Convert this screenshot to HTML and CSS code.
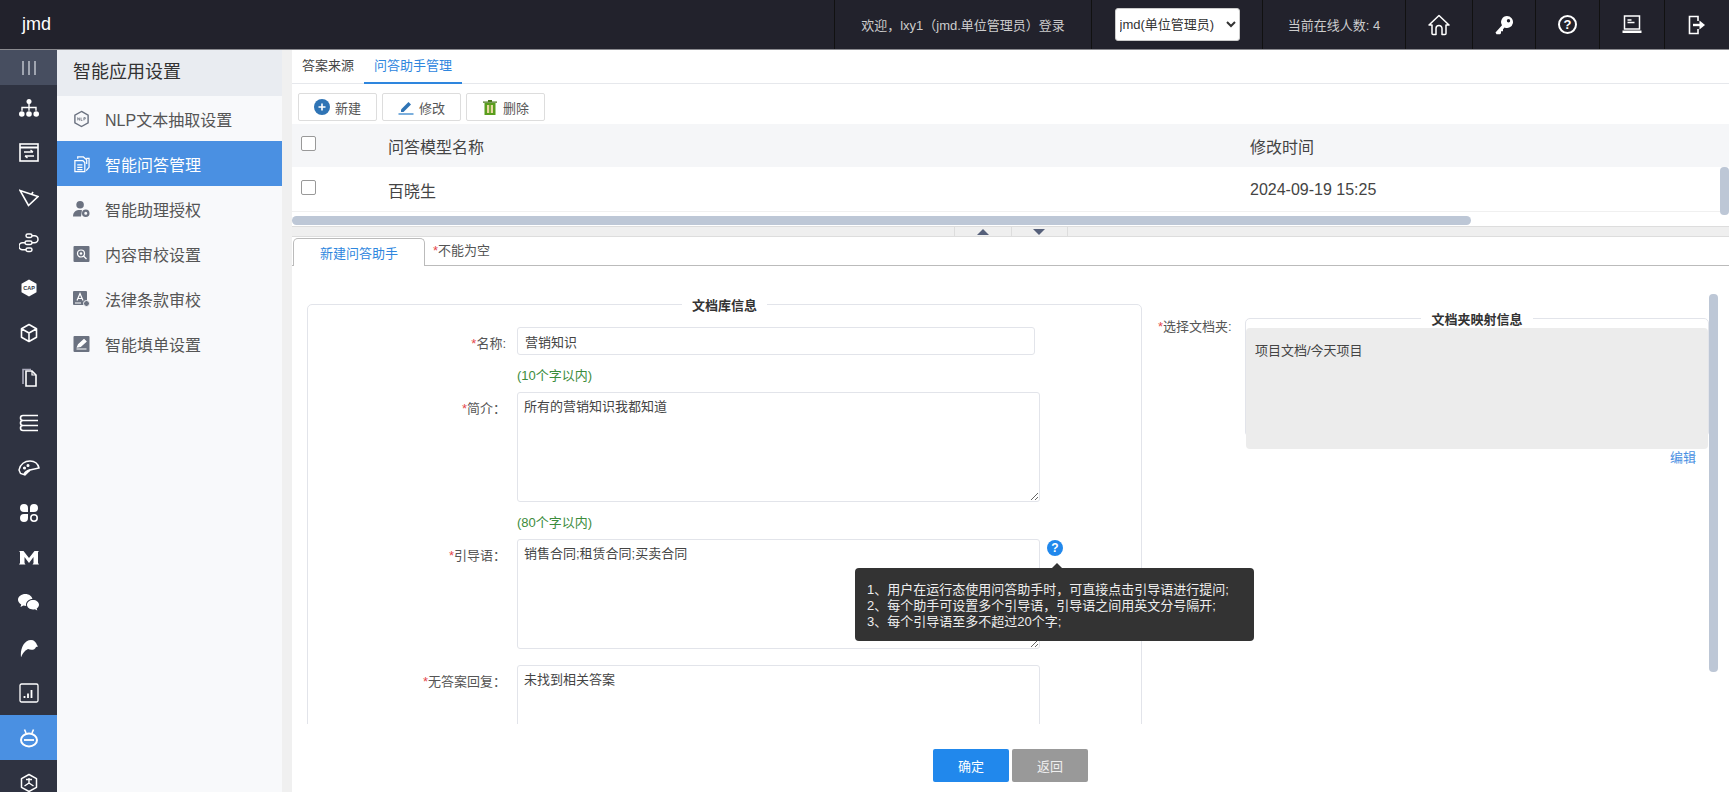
FILE: index.html
```html
<!DOCTYPE html>
<html lang="zh-CN">
<head>
    <meta charset="UTF-8">
    <meta name="viewport" content="width=device-width, initial-scale=1.0">
    <title>智能问答管理</title>
    <link rel="stylesheet" href="styles.css">
</head>
<body>
    <!-- Top bar -->
    <header class="topbar">
        <div class="logo">jmd</div>
        <div class="top-cell cell-welcome">欢迎，lxy1（jmd.单位管理员）登录</div>
        <div class="top-cell cell-role">
            <select class="role-select">
                <option>jmd(单位管理员)</option>
            </select>
        </div>
        <div class="top-cell cell-online">当前在线人数: 4</div>
        <div class="top-cell cell-icon w67">
            <svg width="22" height="22" viewBox="0 0 22 22" fill="none" stroke="#fff" stroke-width="1.5" stroke-linejoin="round"><path d="M1 11 11 1.5 21 11h-3v8.5a1 1 0 0 1-1 1h-3v-6a3 3 0 0 0-6 0v6H5a1 1 0 0 1-1-1V11z"/></svg>
        </div>
        <div class="top-cell cell-icon w63">
            <svg width="20" height="20" viewBox="0 0 20 20"><path fill="#fff" fill-rule="evenodd" d="M13 1a6 6 0 1 1-2.4 11.5L9 14.2v2H7v2l-1 1H2.5L1.5 17.500 8 10.200A6 6 0 0 1 13 1zm1.500 3a1.700 1.700 0 1 0 0 3.400 1.700 1.700 0 0 0 0-3.400z"/></svg>
        </div>
        <div class="top-cell cell-icon w64">
            <span class="help-ring">?</span>
        </div>
        <div class="top-cell cell-icon w65">
            <svg width="20" height="20" viewBox="0 0 20 20" fill="none" stroke="#fff"><rect x="2.500" y="1" width="15" height="13" stroke-width="1.500"/><path d="M5.500 5h4M5.500 7.500h7" stroke-width="1.300"/><path d="M0.500 15.500h19V18H0.500z" fill="#fff" stroke="none"/></svg>
        </div>
        <div class="top-cell cell-icon w65">
            <svg width="20" height="20" viewBox="0 0 20 20" fill="none" stroke="#fff" stroke-width="1.600"><path d="M11 6V1.500H2.500v17H11V14"/><path d="M6 10h7.500" stroke-width="2.400"/><path d="M12.500 5.500 18 10l-5.500 4.500z" fill="#fff" stroke="none"/></svg>
        </div>
    </header>

    <div class="layout">
        <!-- Icon rail -->
        <nav class="rail">
            <div class="rail-toggle"><span></span><span></span><span></span></div>
            <div class="rail-item">
                <svg width="20" height="20" viewBox="0 0 20 20" fill="#fff"><circle cx="10" cy="3.500" r="2.500"/><circle cx="2.800" cy="16" r="2.800"/><circle cx="10" cy="16" r="2.800"/><circle cx="17.200" cy="16" r="2.800"/><path d="M9.300 5h1.400v3.800h7v4h-1.400v-2.600h-5.600v2.600H9.300v-2.600H3.700v2.600H2.300v-4h7z"/></svg>
            </div>
            <div class="rail-item">
                <svg width="20" height="20" viewBox="0 0 20 20" fill="none" stroke="#fff"><rect x="1" y="1" width="18" height="17" stroke-width="1.600"/><path d="M1 4.500h18" stroke-width="2"/><path d="M5 9h9M11.500 7 14 9M15 13H6M8.500 15 6 13" stroke-width="1.400"/></svg>
            </div>
            <div class="rail-item">
                <svg width="20" height="20" viewBox="0 0 20 20" fill="none" stroke="#fff" stroke-width="1.600"><path d="M1 2.500 19 8.500 9.500 17.500zM12.500 6.500 14 4"/></svg>
            </div>
            <div class="rail-item">
                <svg width="20" height="20" viewBox="0 0 20 20" fill="none" stroke="#fff" stroke-width="1.500"><rect x="7" y="1" width="6" height="3.500" rx="1.700"/><rect x="6" y="8" width="7" height="3.500" rx="1.700"/><rect x="7" y="15" width="6" height="3.500" rx="1.700"/><path d="M13 2.800h2.500a3 3 0 0 1 0 7H13M6 9.800H3.500a3 3 0 0 0 0 7H7"/></svg>
            </div>
            <div class="rail-item">
                <svg width="20" height="20" viewBox="0 0 20 20"><path fill="#fff" d="M10 1.500 17.500 5.700v8.600L10 18.500 2.500 14.300V5.700z"/><text class="cap-text" x="10" y="12" text-anchor="middle">CAP</text></svg>
            </div>
            <div class="rail-item">
                <svg width="20" height="20" viewBox="0 0 20 20" fill="none" stroke="#fff" stroke-width="1.600" stroke-linejoin="round"><path d="M10 1.500 17.500 5.700v8.600L10 18.500 2.500 14.300V5.700zM2.500 5.700 10 10l7.500-4.300M10 10v8.500"/></svg>
            </div>
            <div class="rail-item">
                <svg width="20" height="20" viewBox="0 0 20 20" fill="none" stroke="#fff" stroke-width="1.600"><path d="M7 3h6l4 4v11H7z"/><path d="M4 16V1.500h8" stroke="#aab" /><path d="M13 3v4h4" stroke-width="1.200"/></svg>
            </div>
            <div class="rail-item">
                <svg width="20" height="20" viewBox="0 0 20 20" fill="none" stroke="#fff" stroke-width="1.600"><path d="M19 2.500H4a2.500 2.500 0 0 0 0 5h15M1.500 7.500h17M1.500 12.500h17M19 7.500H4a2.500 2.500 0 0 0 0 5M19 12.500H4a2.500 2.500 0 0 0 0 5h15"/></svg>
            </div>
            <div class="rail-item">
                <svg width="22" height="20" viewBox="0 0 22 20" fill="none" stroke="#fff" stroke-width="1.500"><path d="M1 12C2 6 7 3 12 3s8 3 9 7l-9 2-5 5-4.500-1.500z"/><path d="M6 17c1-3 3-4 6-5" stroke-width="2"/><circle cx="6.500" cy="10" r=".8" fill="#fff"/><circle cx="10" cy="7.500" r=".8" fill="#fff"/></svg>
            </div>
            <div class="rail-item">
                <svg width="20" height="20" viewBox="0 0 20 20" fill="#fff"><path d="M5 1a4 4 0 0 1 4 4v4H5a4 4 0 0 1 0-8zM15 1a4 4 0 0 1 0 8h-4V5a4 4 0 0 1 4-4zM5 11h4v4a4 4 0 1 1-4-4z"/><circle cx="15" cy="15" r="3.200" fill="none" stroke="#fff" stroke-width="1.600"/></svg>
            </div>
            <div class="rail-item">
                <svg width="20" height="16" viewBox="0 0 20 16" fill="#fff"><path d="M0 1h4.500L10 8l5.500-7H20l-1 1v11l1 1.500h-6.500L14.500 13V7L10 13 5.500 7v6l1 1.500H0L1 13V2z"/></svg>
            </div>
            <div class="rail-item">
                <svg width="21" height="18" viewBox="0 0 21 18" fill="#fff"><path d="M7.500 0C11 0 14 2.200 14.400 5 11 5 8 7.500 8 10.500c0 .6.100 1 .2 1.500-1 0-1.800-.1-2.700-.4L2.500 13l.7-2.500C1.200 9.100 0 7.500 0 5.700 0 2.500 3.300 0 7.500 0z"/><path d="M15 6c3.300 0 6 2.100 6 4.800 0 1.500-.9 2.800-2.300 3.700l.6 2-2.400-1.200c-.6.100-1.200.2-1.900.2-3.300 0-6-2.100-6-4.700C9 8.100 11.700 6 15 6z"/></svg>
            </div>
            <div class="rail-item">
                <svg width="18" height="18" viewBox="0 0 18 18" fill="#fff"><path d="M1 18C0 10 4 1 11 1c3 0 5 2 6 5l1 1.500-2 .5c-1 3-5 3.500-8 2-2 1-5 3-7 8.500z"/></svg>
            </div>
            <div class="rail-item">
                <svg width="20" height="20" viewBox="0 0 20 20" fill="none"><rect x="1" y="1" width="18" height="18" rx="1.500" stroke="#fff" stroke-width="1.300"/><path d="M5.500 15v-2M9 15v-4.500M12.500 15V7" stroke="#fff" stroke-width="1.800"/></svg>
            </div>
            <div class="rail-item is-active">
                <svg width="20" height="20" viewBox="0 0 20 20" fill="none" stroke="#fff" stroke-width="2"><ellipse cx="10" cy="12" rx="8" ry="6.500"/><path d="M5 12h10" stroke-width="1.800"/><path d="M5.500 1.500 7 5M14.500 1.500 13 5" stroke-width="1.600"/></svg>
            </div>
            <div class="rail-item">
                <svg width="20" height="20" viewBox="0 0 20 20" fill="none" stroke="#fff" stroke-width="1.500" stroke-linejoin="round"><path d="M10 1.500 17.500 5.700v8.600L10 18.500 2.500 14.300V5.700z"/><path d="M10 10V5M10 10l-4.500 3M10 10l4.500 3M7 6.500 13 6.500" stroke-width="1.400"/></svg>
            </div>
        </nav>

        <!-- Sub menu -->
        <aside class="submenu">
            <div class="submenu-title">智能应用设置</div>
            <div class="submenu-item">
                <svg width="18" height="18" viewBox="0 0 18 18" fill="none" stroke="#6b7280"><path d="M9 1 16 5v8l-7 4-7-4V5z" stroke-width="1.500"/><path d="M5 7.500v3M5 7.500l2 3v-3M8.500 7.500v3h1.500M11.500 10.500v-3h1.500v1.500h-1.500" stroke-width=".8"/></svg>
                NLP文本抽取设置
            </div>
            <div class="submenu-item is-active">
                <svg width="18" height="18" viewBox="0 0 18 18" fill="none" stroke="#fff" stroke-width="1.300"><path d="M2 5.500h8.500l2 2V17H2zM5 3.500V1.500h6l3.500 3V9M14 3h3v9.500l-3 3.500"/><path d="M4.500 10h5.500M4.500 12.500h5.500M4.500 15h5.500"/></svg>
                智能问答管理
            </div>
            <div class="submenu-item">
                <svg width="18" height="18" viewBox="0 0 18 18" fill="#6b7280"><circle cx="7.500" cy="4.500" r="4"/><path d="M0 17c0-5 3-7 7.500-7 1 0 1.500 0 2 .3L8.500 17z"/><circle cx="13.500" cy="13.500" r="2.800" fill="none" stroke="#6b7280" stroke-width="2.400"/></svg>
                智能助理授权
            </div>
            <div class="submenu-item">
                <svg width="16" height="16" viewBox="0 0 16 16"><rect width="16" height="16" rx="1" fill="#6b7280"/><circle cx="7.500" cy="7.500" r="3.500" fill="none" stroke="#fff" stroke-width="1.200"/><path d="M10 10l3 3" stroke="#fff" stroke-width="1.200"/><circle cx="7.500" cy="7.500" r="1.200" fill="#fff"/></svg>
                内容审校设置
            </div>
            <div class="submenu-item">
                <svg width="17" height="16" viewBox="0 0 17 16"><rect width="14" height="14" rx="1" fill="#6b7280"/><path d="M4 9.500 7 2.500l3 7M5 7.500h4M2 12h6" stroke="#fff" stroke-width="1.200" fill="none"/><circle cx="13.500" cy="12.500" r="3" fill="#6b7280" stroke="#f8f9fb"/></svg>
                法律条款审校
            </div>
            <div class="submenu-item">
                <svg width="16" height="16" viewBox="0 0 16 16"><rect width="16" height="16" rx="1" fill="#6b7280"/><path d="M4 11 5 8.500 10.500 3.500 12.500 5.500 7 10.500zM3 13h10" stroke="#fff" stroke-width="1.200" fill="#fff"/></svg>
                智能填单设置
            </div>
        </aside>

        <div class="gutter"></div>

        <main class="main">
            <div class="tabs">
                <span class="tab">答案来源</span>
                <span class="tab is-active">问答助手管理</span>
            </div>

            <div class="toolbar">
                <button class="tool-btn">
                    <svg width="16" height="16" viewBox="0 0 16 16"><circle cx="8" cy="8" r="8" fill="#2f74b5"/><path d="M8 4.500v7M4.500 8h7" stroke="#fff" stroke-width="1.600"/></svg>
                    新建
                </button>
                <button class="tool-btn">
                    <svg width="16" height="16" viewBox="0 0 16 16"><path d="M3 10.500 10.500 3l2.500 2.500L5.500 13H3z" fill="#2f74b5"/><path d="M0.500 15h15" stroke="#5b9bd5" stroke-width="1.600"/></svg>
                    修改
                </button>
                <button class="tool-btn">
                    <svg width="16" height="16" viewBox="0 0 16 16"><rect x="2.500" y="4" width="11" height="12" fill="#5a9e1e"/><rect x="5" y="6" width="2.200" height="8" fill="#e8d9a0"/><rect x="8.800" y="6" width="2.200" height="8" fill="#e8d9a0"/><path d="M1 2.500h14v1.200H1zM6 1h4v1.500H6z" fill="#4b7a1c"/></svg>
                    删除
                </button>
            </div>

            <div class="grid-wrap">
                <div class="grid-row grid-head">
                    <span class="check"></span>
                    <span class="cell">问答模型名称</span>
                    <span class="cell">修改时间</span>
                </div>
                <div class="grid-row">
                    <span class="check"></span>
                    <span class="cell">百晓生</span>
                    <span class="cell">2024-09-19 15:25</span>
                </div>
                <div class="scroll-v scroll-v-grid"></div>
            </div>
            <div class="scroll-h"><div class="scroll-h-thumb"></div></div>

            <div class="splitter">
                <span class="split-btn"><i class="arrow-up"></i></span>
                <span class="split-btn"><i class="arrow-down"></i></span>
            </div>

            <div class="edit-tabs">
                <span class="edit-tab">新建问答助手</span>
                <span class="edit-note"><em>*</em>不能为空</span>
            </div>

            <div class="form-area">
                <fieldset class="box box-doc">
                    <legend>文档库信息</legend>
                    <div class="form-row">
                        <label class="form-label"><em>*</em>名称:</label>
                        <input class="text-input" type="text" value="营销知识">
                    </div>
                    <div class="form-hint">(10个字以内)</div>
                    <div class="form-row">
                        <label class="form-label"><em>*</em>简介：</label>
                        <textarea class="text-area">所有的营销知识我都知道</textarea>
                    </div>
                    <div class="form-hint">(80个字以内)</div>
                    <div class="form-row">
                        <label class="form-label"><em>*</em>引导语：</label>
                        <div class="field-help">
                            <textarea class="text-area">销售合同;租赁合同;买卖合同</textarea>
                            <span class="help-dot">?</span>
                            <div class="tooltip">
                                1、用户在运行态使用问答助手时，可直接点击引导语进行提问;<br>
                                2、每个助手可设置多个引导语，引导语之间用英文分号隔开;<br>
                                3、每个引导语至多不超过20个字;
                            </div>
                        </div>
                    </div>
                    <div class="form-row row-gap">
                        <label class="form-label"><em>*</em>无答案回复：</label>
                        <textarea class="text-area">未找到相关答案</textarea>
                    </div>
                </fieldset>

                <div class="folder-side">
                    <label class="folder-label"><em>*</em>选择文档夹:</label>
                    <div class="folder-col">
                        <fieldset class="box box-folder">
                            <legend>文档夹映射信息</legend>
                            <div class="folder-path">项目文档/今天项目</div>
                        </fieldset>
                        <a class="edit-link" href="#">编辑</a>
                    </div>
                </div>

                <div class="scroll-v scroll-v-form"></div>
            </div>

            <div class="footer">
                <button class="foot-btn btn-primary">确定</button>
                <button class="foot-btn btn-back">返回</button>
            </div>
        </main>
    </div>
</body>
</html>
```

FILE: styles.css
```css
* {
    margin: 0;
    padding: 0;
    box-sizing: border-box;
}

html, body {
    height: 100%;
    overflow: hidden;
}

body {
    font-family: "Liberation Sans", "Noto Sans CJK SC", sans-serif;
    font-size: 13px;
    color: #333;
    background: #fff;
}

em {
    font-style: normal;
    color: #e5484d;
}

/* Top bar */
.topbar {
    display: flex;
    height: 50px;
    background: #22222c;
    border-bottom: 1px solid #8a8a8f;
    color: #ccc;
}

.logo {
    width: 834px;
    padding-left: 22px;
    font-size: 18px;
    line-height: 49px;
    color: #fff;
}

.top-cell {
    display: flex;
    align-items: center;
    justify-content: center;
    border-left: 1px solid #111;
}

.cell-welcome { width: 257px; }
.cell-role { width: 171px; }
.cell-online { width: 143px; }
.w67 { width: 67px; }
.w63 { width: 63px; }
.w64 { width: 64px; }
.w65 { width: 65px; }

.role-select {
    width: 125px;
    height: 33px;
    font-family: inherit;
    font-size: 13px;
    color: #333;
    background: #fff;
    border: 1px solid #ccc;
    border-radius: 3px;
}

.help-ring {
    width: 19px;
    height: 19px;
    border: 2px solid #fff;
    border-radius: 50%;
    font-size: 13px;
    font-weight: 700;
    line-height: 15px;
    text-align: center;
    color: #fff;
}

/* Page body */
.layout {
    display: flex;
    height: 742px;
}

.rail {
    width: 57px;
    flex: none;
    overflow: hidden;
    background: #2f3341;
}

.rail-toggle {
    display: flex;
    height: 35px;
    align-items: center;
    justify-content: center;
    gap: 4px;
    background: #474e60;
}

.rail-toggle span {
    width: 2px;
    height: 14px;
    background: #a0a5b0;
}

.rail-item {
    display: flex;
    height: 45px;
    align-items: center;
    justify-content: center;
}

.rail-item.is-active {
    background: #4a90e2;
}

.cap-text {
    font-size: 5.500px;
    font-weight: 700;
    fill: #2f3341;
}

.submenu {
    width: 225px;
    flex: none;
    background: #f8f9fb;
}

.submenu-title {
    height: 46px;
    padding-left: 16px;
    font-size: 18px;
    line-height: 44px;
    color: #333;
    background: #e9ecf1;
}

.submenu-item {
    display: flex;
    height: 45px;
    align-items: center;
    gap: 15px;
    padding-left: 16px;
    font-size: 16px;
    color: #555;
}

.submenu-item svg {
    flex: none;
    width: 17px;
}

.submenu-item.is-active {
    color: #fff;
    background: #4a90e2;
}

.gutter {
    width: 10px;
    flex: none;
    background: #f0f0f0;
}

.main {
    display: flex;
    flex: 1;
    min-width: 0;
    flex-direction: column;
}

/* Upper list */
.tabs {
    display: flex;
    height: 34px;
    flex: none;
    padding-left: 9px;
    border-bottom: 1px solid #e6e8ec;
}

.tab {
    padding: 0 1px;
    line-height: 31px;
    color: #444;
}

.tab.is-active {
    height: 34px;
    margin-left: 9px;
    padding: 0 10px;
    color: #2e86de;
    border-bottom: 2px solid #2e86de;
}

.toolbar {
    display: flex;
    height: 40px;
    flex: none;
    gap: 5px;
    padding: 9px 6px 3px;
}

.tool-btn {
    display: flex;
    width: 79px;
    height: 28px;
    align-items: center;
    justify-content: center;
    gap: 5px;
    font-family: inherit;
    font-size: 13px;
    color: #555;
    background: #fff;
    border: 1px solid #ddd;
    border-radius: 2px;
}

.grid-wrap {
    position: relative;
    flex: none;
}

.grid-row {
    display: grid;
    height: 45px;
    grid-template-columns: 96px 862px 1fr;
    align-items: center;
    font-size: 16px;
    color: #444;
    border-bottom: 1px solid #f0f0f0;
}

.grid-head {
    height: 43px;
    background: #f5f6f8;
    border-bottom: 0;
}

.check {
    width: 15px;
    height: 15px;
    margin: -4px 0 0 9px;
    background: #fff;
    border: 1px solid #999;
    border-radius: 2px;
}

.cell {
    padding-top: 1px;
}

.scroll-v {
    position: absolute;
    width: 9px;
    background: #bdc7d6;
    border-radius: 4px;
}

.scroll-v-grid {
    top: 43px;
    right: 0;
    height: 48px;
}

.scroll-h {
    height: 14px;
    flex: none;
    padding-top: 4px;
}

.scroll-h-thumb {
    width: 1179px;
    height: 9px;
    background: #bdc7d6;
    border-radius: 5px;
}

.splitter {
    display: flex;
    height: 11px;
    flex: none;
    justify-content: center;
    padding-left: 0;
    background: #efefef;
    border-top: 1px solid #ddd;
    border-bottom: 1px solid #ddd;
}

.split-btn {
    display: flex;
    width: 57px;
    align-items: center;
    justify-content: center;
    border-left: 1px solid #ddd;
}

.split-btn:last-child {
    border-right: 1px solid #ddd;
}

.arrow-up, .arrow-down {
    width: 0;
    height: 0;
    border-left: 6px solid transparent;
    border-right: 6px solid transparent;
}

.arrow-up { border-bottom: 6px solid #56607a; }
.arrow-down { border-top: 6px solid #56607a; }

/* Lower editor */
.edit-tabs {
    display: flex;
    height: 28px;
    flex: none;
    margin-top: 1px;
    align-items: flex-end;
    padding-left: 1px;
    border-bottom: 1px solid #bbb;
}

.edit-tab {
    width: 132px;
    height: 28px;
    margin-bottom: -1px;
    font-size: 13px;
    line-height: 30px;
    text-align: center;
    color: #2e86de;
    background: #fff;
    border: 1px solid #bbb;
    border-bottom: 0;
    border-radius: 5px 5px 0 0;
}

.edit-note {
    margin-left: 8px;
    line-height: 25px;
    align-self: flex-start;
    color: #555;
}

.form-area {
    position: relative;
    display: flex;
    height: 458px;
    flex: none;
    overflow: hidden;
    padding: 29px 0 0 15px;
}

.box {
    min-width: 0;
    border: 1px solid #e2e4ea;
    border-radius: 5px;
}

.box legend {
    margin: 0 auto;
    padding: 0 10px;
    font-size: 13px;
    font-weight: 700;
    color: #333;
}

.box-doc {
    width: 835px;
    flex: none;
    align-self: flex-start;
    height: 500px;
    padding-top: 13px;
}

.form-row {
    display: flex;
    align-items: flex-start;
}

.row-gap {
    margin-top: 16px;
}

.form-label {
    width: 198px;
    flex: none;
    margin-right: 11px;
    padding-top: 6px;
    text-align: right;
    color: #555;
}

.text-input {
    width: 518px;
    height: 28px;
    padding: 0 7px;
    font-family: inherit;
    font-size: 13px;
    color: #444;
    border: 1px solid #e2e4ea;
    border-radius: 3px;
}

.text-area {
    display: block;
    width: 523px;
    height: 110px;
    padding: 3px 6px;
    font-family: inherit;
    font-size: 13px;
    color: #444;
    border: 1px solid #e2e4ea;
    border-radius: 3px;
}

.form-hint {
    height: 37px;
    padding: 12px 0 0 209px;
    line-height: 18px;
    color: #3c8c3c;
}

.field-help {
    position: relative;
    width: 523px;
}

.help-dot {
    position: absolute;
    top: 1px;
    left: 530px;
    width: 16px;
    height: 16px;
    font-size: 12px;
    font-weight: 700;
    line-height: 16px;
    text-align: center;
    color: #fff;
    background: #2188ec;
    border-radius: 50%;
}

.tooltip {
    position: absolute;
    top: 29px;
    left: 338px;
    width: 399px;
    height: 73px;
    padding: 14px 12px;
    font-size: 13px;
    line-height: 16px;
    color: #eee;
    background: #333;
    border-radius: 4px;
}

.tooltip::before {
    content: "";
    position: absolute;
    top: -5px;
    left: 196px;
    border-left: 6px solid transparent;
    border-right: 6px solid transparent;
    border-bottom: 6px solid #333;
}

.folder-side {
    display: flex;
    flex: 1;
    min-width: 0;
    padding: 14px 20px 0 16px;
    align-items: flex-start;
}

.folder-label {
    width: 87px;
    flex: none;
    padding-top: 7px;
    white-space: nowrap;
    color: #555;
}

.folder-col {
    flex: 1;
}

.box-folder {
    width: 464px;
    height: 128px;
}

.folder-path {
    height: 121px;
    padding: 12px 9px;
    color: #444;
    background: #ececec;
    border-radius: 4px;
}

.edit-link {
    display: block;
    margin: 10px 13px 0 0;
    text-align: right;
    text-decoration: none;
    color: #4a90e2;
}

.scroll-v-form {
    top: 28px;
    right: 11px;
    height: 378px;
}

.footer {
    display: flex;
    height: 69px;
    flex: none;
    gap: 3px;
    justify-content: center;
    margin-left: 0;
    padding: 11px 0 0;
    background: linear-gradient(#fff 14px, #e6e6e6 14px, #e6e6e6 15px, #f9f9f9 15px);
    background: #fff;
}

.foot-btn {
    width: 76px;
    height: 33px;
    margin-top: 14px;
    font-family: inherit;
    font-size: 13px;
    color: #fff;
    border: 0;
    border-radius: 2px;
}

.btn-primary { background: #2188ec; }
.btn-back { background: #999; color: #eee; }
```
